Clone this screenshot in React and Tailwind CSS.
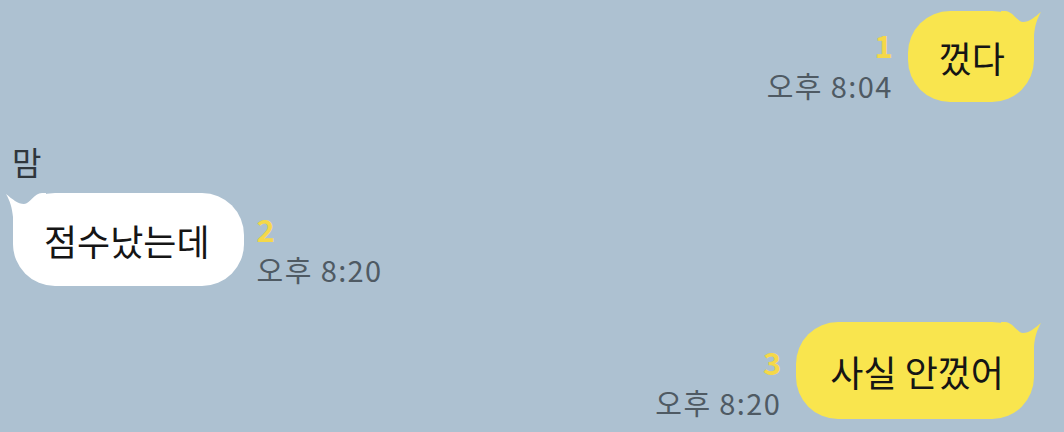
import React from "react";

// Speech-bubble tail at the top outer corner of a message bubble.
function Tail({ side, color }) {
  const isRight = side === "right";
  return (
    <svg
      className={
        "absolute top-0 w-[40px] h-[44px] " +
        (isRight ? "right-[-7px]" : "left-[-7px] -scale-x-100")
      }
      viewBox="0 0 40 44"
    >
      <path
        d="M0 0 L4 0 C12 0 16 11 22 11 C28 11 34 6 40 1 C36 8 34 14 33 24 L33 44 L0 44 Z"
        fill={color}
      />
    </svg>
  );
}

function Bubble({ children, mine, h }) {
  const color = mine ? "#f9e54e" : "#ffffff";
  return (
    <div
      className={
        "relative flex items-center rounded-[42px] text-[36px] leading-none text-[#151515] " +
        (mine ? "bg-[#f9e54e] " : "bg-white ") +
        h
      }
    >
      <Tail side={mine ? "right" : "left"} color={color} />
      <span className="relative">{children}</span>
    </div>
  );
}

function Meta({ count, time, align }) {
  return (
    <div className={"flex flex-col pb-[1px] " + (align === "right" ? "items-end" : "items-start")}>
      <span className="text-[31px] font-bold leading-[30px] text-[#f5d849]">{count}</span>
      <span className="mt-[9px] text-[29px] leading-[32px] tracking-[1.4px] text-[#4f5a63]">{time}</span>
    </div>
  );
}

export default function App() {
  return (
    <div className="w-[1064px] h-[432px] overflow-hidden bg-[#adc1d1] font-['Noto_Sans_CJK_KR','Noto_Sans',sans-serif]">
      <div className="flex flex-col pt-[11px] pl-[13px] pr-[30px]">
        <div className="flex items-end justify-end gap-[15px]">
          <Meta count="1" time="오후 8:04" align="right" />
          <Bubble mine h="h-[91px] pl-[31px] pr-[29px]">껐다</Bubble>
        </div>

        <div className="mt-[38px] -ml-[1px] text-[32px] leading-[42px] text-[#2f363c]">맘</div>

        <div className="mt-[11px] flex items-end gap-[13px]">
          <Bubble h="h-[93px] pl-[31px] pr-[34px]">점수났는데</Bubble>
          <Meta count="2" time="오후 8:20" align="left" />
        </div>

        <div className="mt-[36px] flex items-end justify-end gap-[15px]">
          <Meta count="3" time="오후 8:20" align="right" />
          <Bubble mine h="h-[97px] pl-[34px] pr-[30px]">사실 안껐어</Bubble>
        </div>
      </div>
    </div>
  );
}
